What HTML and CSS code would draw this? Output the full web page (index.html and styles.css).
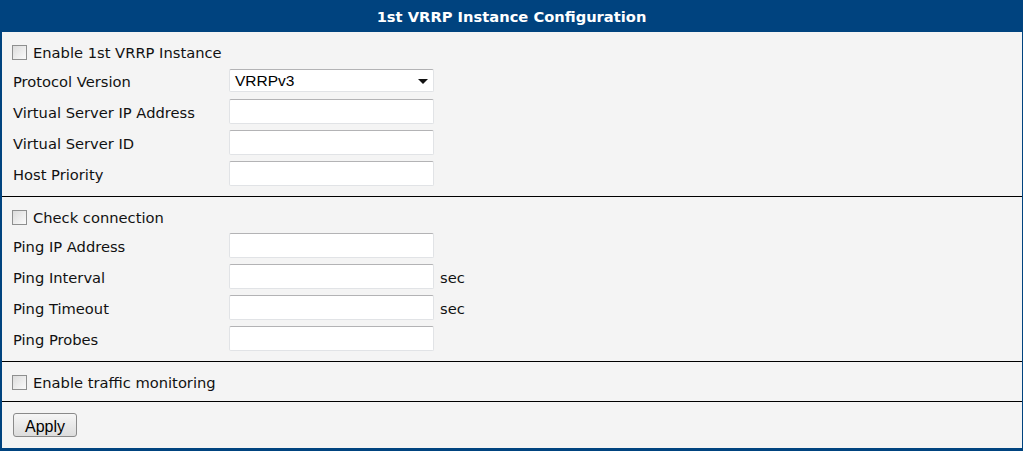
FILE: index.html
```html
<!DOCTYPE html>
<html>
<head>
<meta charset="utf-8">
<link rel="stylesheet" href="styles.css">
</head>
<body>
<div class="frame">
  <div class="header">1st VRRP Instance Configuration</div>
  <div class="section">
    <label class="check-row"><span class="checkbox"></span>Enable 1st VRRP Instance</label>
    <div class="row"><span class="label">Protocol Version</span><div class="select">VRRPv3<span class="arrow"></span></div></div>
    <div class="row"><span class="label">Virtual Server IP Address</span><span class="input"></span></div>
    <div class="row"><span class="label">Virtual Server ID</span><span class="input"></span></div>
    <div class="row"><span class="label">Host Priority</span><span class="input"></span></div>
  </div>
  <div class="section">
    <label class="check-row"><span class="checkbox"></span>Check connection</label>
    <div class="row"><span class="label">Ping IP Address</span><span class="input"></span></div>
    <div class="row"><span class="label">Ping Interval</span><span class="input"></span><span class="unit">sec</span></div>
    <div class="row"><span class="label">Ping Timeout</span><span class="input"></span><span class="unit">sec</span></div>
    <div class="row"><span class="label">Ping Probes</span><span class="input"></span></div>
  </div>
  <div class="section short">
    <label class="check-row"><span class="checkbox"></span>Enable traffic monitoring</label>
  </div>
  <div class="section last">
    <button class="button">Apply</button>
  </div>
</div>
</body>
</html>
```
FILE: styles.css
```css
html, body {
  margin: 0;
  padding: 0;
  background: #f4f4f4;
}
.frame {
  width: 1023px;
  height: 451px;
  box-sizing: border-box;
  border-left: 2px solid #00437f;
  border-right: 1px solid #00437f;
  border-bottom: 3px solid #00437f;
  background: #f4f4f4;
  font-family: "DejaVu Sans", Verdana, sans-serif;
  font-size: 14.7px;
  color: #111;
}
.header {
  height: 32px;
  line-height: 34px;
  margin-left: -2px;
  margin-right: -1px;
  background: #00437f;
  color: #fff;
  font-weight: bold;
  text-align: center;
  font-size: 14.7px;
}
.section {
  padding: 7px 0 7px 0;
  border-bottom: 1px solid #000;
}
.section.short {
  padding-bottom: 6px;
}
.section.last {
  border-bottom: none;
  padding: 11px 0 0 11px;
}
.check-row {
  display: flex;
  align-items: center;
  height: 26px;
  padding-left: 10px;
}
.checkbox {
  width: 13px;
  height: 13px;
  border: 1px solid #8e8f8f;
  background: linear-gradient(135deg, #dcdcdc, #fbfbfb);
  margin-right: 6px;
  flex: none;
}
.row {
  display: flex;
  align-items: center;
  height: 31px;
  padding-left: 11px;
}
.label {
  width: 216px;
  flex: none;
  padding-top: 2px;
}
.unit {
  margin-left: 6px;
  padding-top: 2px;
}
.input, .select {
  width: 205px;
  height: 25px;
  box-sizing: border-box;
  background: #fff;
  border: 1px solid #e1e3e6;
  border-top-color: #b3b3b5;
  border-radius: 2px;
  flex: none;
}
.select {
  height: 23px;
  position: relative;
  display: flex;
  align-items: center;
  padding-left: 5px;
  font-family: "Liberation Sans", Arial, sans-serif;
  font-size: 15.5px;
  color: #000;
}
.arrow {
  position: absolute;
  right: 5px;
  top: 9px;
  width: 0;
  height: 0;
  border-left: 5px solid transparent;
  border-right: 5px solid transparent;
  border-top: 5px solid #111;
}
.button {
  width: 64px;
  height: 24px;
  border: 1px solid #8a8a8a;
  border-radius: 3px;
  background: linear-gradient(#f6f6f6, #dcdcdc);
  font-family: "Liberation Sans", Arial, sans-serif;
  font-size: 16px;
  color: #000;
  padding: 3px 0 0 0;
}
```
